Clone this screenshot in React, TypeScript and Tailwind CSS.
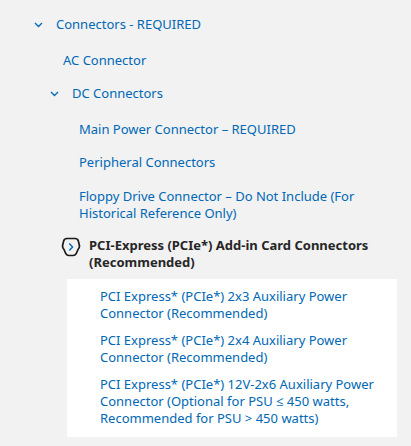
import React from "react";

const Down = () => (
  <svg width="9" height="6" viewBox="0 0 9 6" className="shrink-0">
    <path d="M1 1 L4.5 4.5 L8 1" fill="none" stroke="#0068b5" strokeWidth="1.3" />
  </svg>
);

const Focus = () => (
  <svg width="20" height="20" viewBox="0 0 20 20" className="shrink-0">
    <path
      d="M6 1.5 H14 Q17 1.5 17.5 4.5 L18.5 9 Q18.5 11 17 12.5 L15.5 16 Q14.5 18.5 12 18.5 H8 Q5.5 18.5 4.5 16 L3 12.5 Q1.5 11 1.5 9 L2.5 4.5 Q3 1.5 6 1.5 Z"
      fill="none"
      stroke="#1a1a1a"
      strokeWidth="1.7"
      strokeLinejoin="round"
    />
    <path d="M8.3 6.5 L11.6 10 L8.3 13.5" fill="none" stroke="#0068b5" strokeWidth="1.4" />
  </svg>
);

export default function App() {
  return (
    <div
      className="w-[411px] h-[446px] bg-[#f2f2f2] text-[13px] leading-[17px] text-[#0068b5] overflow-hidden"
      style={{ fontFamily: '"Noto Sans", "Open Sans", sans-serif' }}
    >
      <div className="flex items-center pl-[34px] pt-[16px] gap-[13px]">
        <Down />
        <span>Connectors - REQUIRED</span>
      </div>
      <div className="pl-[63px] pt-[19px]">AC Connector</div>
      <div className="flex items-center pl-[50px] pt-[16px] gap-[13px]">
        <Down />
        <span>DC Connectors</span>
      </div>
      <div className="pl-[79px] pr-[20px]">
        <div className="pt-[19px]">Main Power Connector – REQUIRED</div>
        <div className="pt-[16px]">Peripheral Connectors</div>
        <div className="pt-[17px]">
          Floppy Drive Connector – Do Not Include (For
          <br />
          Historical Reference Only)
        </div>
      </div>
      <div className="flex pl-[61px] pt-[15px] gap-[8px]">
        <div className="shrink-0">
          <Focus />
        </div>
        <div className="font-bold text-[#262626]">
          PCI-Express (PCIe*) Add-in Card Connectors
          <br />
          (Recommended)
        </div>
      </div>
      <div className="ml-[67px] mt-[8px] w-[330px] bg-white pl-[33px] pr-[10px] pt-[9px] pb-[10px] flex flex-col gap-[10px]">
        <div>
          PCI Express* (PCIe*) 2x3 Auxiliary Power
          <br />
          Connector (Recommended)
        </div>
        <div>
          PCI Express* (PCIe*) 2x4 Auxiliary Power
          <br />
          Connector (Recommended)
        </div>
        <div>
          PCI Express* (PCIe*) 12V-2x6 Auxiliary Power
          <br />
          Connector (Optional for PSU ≤ 450 watts,
          <br />
          Recommended for PSU &gt; 450 watts)
        </div>
      </div>
    </div>
  );
}
